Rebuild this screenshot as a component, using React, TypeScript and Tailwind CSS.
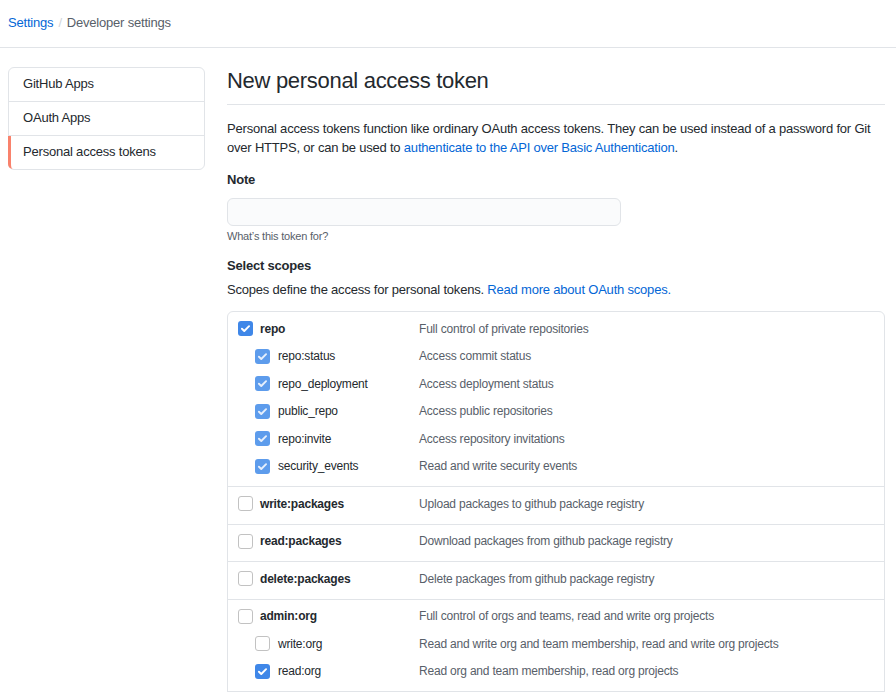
type Scope = {
  name: string;
  desc: string;
  checked?: boolean;
  children?: { name: string; desc: string; checked?: boolean; locked?: boolean }[];
};

const scopes: Scope[] = [
  {
    name: "repo",
    desc: "Full control of private repositories",
    checked: true,
    children: [
      { name: "repo:status", desc: "Access commit status", checked: true, locked: true },
      { name: "repo_deployment", desc: "Access deployment status", checked: true, locked: true },
      { name: "public_repo", desc: "Access public repositories", checked: true, locked: true },
      { name: "repo:invite", desc: "Access repository invitations", checked: true, locked: true },
      { name: "security_events", desc: "Read and write security events", checked: true, locked: true },
    ],
  },
  { name: "write:packages", desc: "Upload packages to github package registry" },
  { name: "read:packages", desc: "Download packages from github package registry" },
  { name: "delete:packages", desc: "Delete packages from github package registry" },
  {
    name: "admin:org",
    desc: "Full control of orgs and teams, read and write org projects",
    children: [
      { name: "write:org", desc: "Read and write org and team membership, read and write org projects" },
      { name: "read:org", desc: "Read org and team membership, read org projects", checked: true },
    ],
  },
  {
    name: "admin:public_key",
    desc: "Full control of user public keys",
    children: [
      { name: "write:public_key", desc: "Write user public keys" },
      { name: "read:public_key", desc: "Read user public keys" },
    ],
  },
];

function Checkbox({ checked, locked }: { checked?: boolean; locked?: boolean }) {
  if (!checked) {
    return (
      <span className="inline-block w-[15px] h-[15px] shrink-0 rounded-[3px] border border-[#c2c2c2] bg-white" />
    );
  }
  return (
    <span
      className={
        locked
          ? "inline-flex w-[15px] h-[15px] shrink-0 items-center justify-center rounded-[3px] bg-[#5d9cec]"
          : "inline-flex w-[15px] h-[15px] shrink-0 items-center justify-center rounded-[3px] bg-[#3f87e8]"
      }
    >
      <svg width="11" height="11" viewBox="0 0 16 16" fill="none">
        <path
          d="M2.8 8.4l3.4 3.3L13.2 4.6"
          stroke={locked ? "#e6effc" : "#ffffff"}
          strokeWidth="2.8"
          strokeLinecap="round"
          strokeLinejoin="round"
        />
      </svg>
    </span>
  );
}

function ScopeGroup({ scope, first }: { scope: Scope; first: boolean }) {
  return (
    <div className={first ? "pt-[3px] pb-[6px]" : "pt-[3px] pb-[6px] border-t border-[#e1e4e8]"}>
      <div className="flex items-center h-[27.5px]">
        <div className="w-[191px] shrink-0 flex items-center gap-[7px] pl-[10px]">
          <Checkbox checked={scope.checked} />
          <span className="font-bold text-[#24292e]">{scope.name}</span>
        </div>
        <span className="text-[#586069]">{scope.desc}</span>
      </div>
      {scope.children?.map((child) => (
        <div key={child.name} className="flex items-center h-[27.5px]">
          <div className="w-[191px] shrink-0 flex items-center gap-[8px] pl-[27px]">
            <Checkbox checked={child.checked} locked={child.locked} />
            <span className="text-[#24292e]">{child.name}</span>
          </div>
          <span className="text-[#586069]">{child.desc}</span>
        </div>
      ))}
    </div>
  );
}

export default function App() {
  const menu = ["GitHub Apps", "OAuth Apps", "Personal access tokens"];

  return (
    <div className="min-h-screen bg-white text-[13px] tracking-[-0.2px] text-[#24292e] font-['Liberation_Sans',Arial,sans-serif]">
      <div className="h-[48px] flex items-center px-2 pb-[1px] border-b border-[#e1e4e8]">
        <a className="text-[#0366d6]">Settings</a>
        <span className="mx-[5px] text-[#d1d5da]">/</span>
        <span className="text-[#586069]">Developer settings</span>
      </div>

      <div className="flex pl-2 pr-[11px] pt-[18px]">
        <nav className="w-[197px] shrink-0 mt-[1px] self-start rounded-[6px] border border-[#e1e4e8]">
          {menu.map((item, i) => (
            <div
              key={item}
              className={
                i === menu.length - 1
                  ? "h-[33px] flex items-center pb-[2px] -ml-px pl-[12px] border-l-[3px] border-[#f9826c] rounded-bl-[5px]"
                  : "h-[34px] flex items-center pb-[2px] pl-[14px] border-b border-[#e1e4e8]"
              }
            >
              {item}
            </div>
          ))}
        </nav>

        <main className="flex-1 ml-[22px]">
          <h1 className="text-[22px] leading-[30px] tracking-[-0.3px] font-normal pb-[8px] border-b border-[#e1e4e8]">
            New personal access token
          </h1>

          <p className="mt-[14px] leading-[19px]">
            Personal access tokens function like ordinary OAuth access tokens. They can be used instead of a password for Git
            over HTTPS, or can be used to{" "}
            <a className="text-[#0366d6]">authenticate to the API over Basic Authentication</a>.
          </p>

          <div className="mt-[13px] leading-[20px] font-bold">Note</div>
          <input
            type="text"
            className="mt-[8px] block h-[28px] w-[394px] rounded-[6px] border border-[#e1e4e8] bg-[#fafbfc] px-2 outline-none"
          />
          <div className="mt-[2px] text-[11px] leading-[16px] text-[#586069]">What’s this token for?</div>

          <div className="mt-[12px] leading-[20px] font-bold">Select scopes</div>
          <div className="mt-[4px] leading-[20px]">
            Scopes define the access for personal tokens.{" "}
            <a className="text-[#0366d6]">Read more about OAuth scopes.</a>
          </div>

          <div className="mt-[11px] rounded-[6px] border border-[#e1e4e8] text-[12px]">
            {scopes.map((scope, i) => (
              <ScopeGroup key={scope.name} scope={scope} first={i === 0} />
            ))}
          </div>
        </main>
      </div>
    </div>
  );
}
